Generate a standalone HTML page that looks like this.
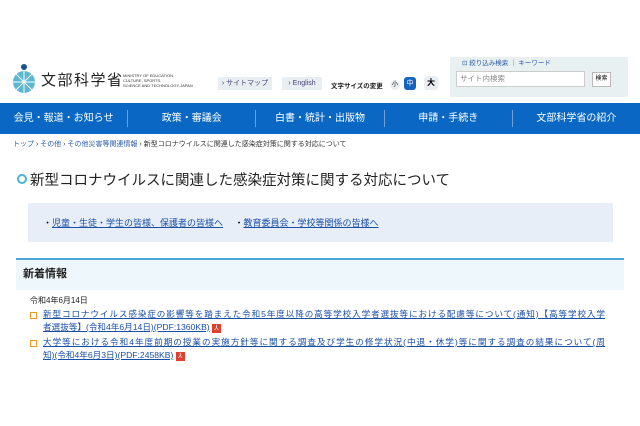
<html><head><style>
body{margin:0;width:640px;height:426px;background:#fff;font-family:"Liberation Sans","Noto Sans CJK JP",sans-serif;position:relative;overflow:hidden}
.a{position:absolute;white-space:nowrap}
a{color:#1a4fa8;text-decoration:underline}
.j{display:block;width:562px;text-align:justify;text-align-last:justify}
.pdf{display:inline-block;width:9px;height:9px;background:#e04030;color:#fff;font-size:7px;line-height:9px;text-align:center;text-decoration:none}
</style></head><body>
<svg class="a" style="left:10px;top:62px" width="28" height="32" viewBox="0 0 28 32"><circle cx="14" cy="5" r="3" fill="#1a4f9c"/><circle cx="14" cy="20" r="11" fill="#5bb8d0"/><g stroke="#fff" stroke-width="1"><line x1="3" y1="20" x2="25" y2="20"/><line x1="14" y1="9" x2="14" y2="31"/><line x1="6" y1="12" x2="22" y2="28"/><line x1="22" y1="12" x2="6" y2="28"/></g></svg>
<div class="a" style="left:41px;top:69px;font-size:15px;letter-spacing:1.5px;color:#222">文部科学省</div>
<div class="a" style="left:123px;top:73px;font-size:4px;line-height:5px;color:#333">MINISTRY OF EDUCATION,<br>CULTURE, SPORTS,<br>SCIENCE AND TECHNOLOGY-JAPAN</div>
<div class="a" style="left:218px;top:77px;width:54px;height:13px;background:#e8eef2;font-size:7px;line-height:13px;color:#447;text-align:center">› サイトマップ</div>
<div class="a" style="left:282px;top:77px;width:40px;height:13px;background:#e8eef2;font-size:7px;line-height:13px;color:#447;text-align:center">› English</div>
<div class="a" style="left:331px;top:80px;font-size:6.5px;color:#222;font-weight:bold">文字サイズの変更</div>
<div class="a" style="left:390px;top:80px;width:10px;height:10px;border-radius:50%;background:#e8eef2;font-size:6px;text-align:center;line-height:10px">小</div>
<div class="a" style="left:404px;top:77px;width:12px;height:13px;border-radius:3px;background:#1565c0;color:#fff;font-size:7px;text-align:center;line-height:13px">中</div>
<div class="a" style="left:424px;top:76px;width:14px;height:14px;border-radius:3px;background:#e8eef2;font-size:8px;font-weight:bold;text-align:center;line-height:14px">大</div>
<div class="a" style="left:450px;top:57px;width:178px;height:40px;background:#e9f0f2"></div>
<div class="a" style="left:462px;top:57px;font-size:6.5px;color:#2a5ba8">⊡ 絞り込み検索 ｜ キーワード</div>
<div class="a" style="left:456px;top:71px;width:124px;height:14px;background:#fff;border:1px solid #ccc;font-size:7.5px;color:#888;line-height:14px;padding-left:3px">サイト内検索</div>
<div class="a" style="left:592px;top:72px;width:17px;height:13px;background:#fff;border:1px solid #bbb;font-size:6px;line-height:13px;text-align:center">検索</div>
<div class="a" style="left:0;top:103px;width:640px;height:31px;background:#0a68c4"></div>
<div class="a" style="left:0;top:103px;width:640px;height:31px;display:flex;color:#fff;font-size:10px;line-height:31px">
<div style="flex:1;text-align:center;border-right:1px solid #6fa0db;margin:7px 0;line-height:17px">会見・報道・お知らせ</div>
<div style="flex:1;text-align:center;border-right:1px solid #6fa0db;margin:7px 0;line-height:17px">政策・審議会</div>
<div style="flex:1;text-align:center;border-right:1px solid #6fa0db;margin:7px 0;line-height:17px">白書・統計・出版物</div>
<div style="flex:1;text-align:center;border-right:1px solid #6fa0db;margin:7px 0;line-height:17px">申請・手続き</div>
<div style="flex:1;text-align:center;margin:7px 0;line-height:17px">文部科学省の紹介</div></div>
<div class="a" style="left:13px;top:139px;font-size:7px;color:#333"><span style="color:#2a5ba8">トップ</span> › <span style="color:#2a5ba8">その他</span> › <span style="color:#2a5ba8">その他災害等関連情報</span> › 新型コロナウイルスに関連した感染症対策に関する対応について</div>
<div class="a" style="left:17px;top:174px;width:6px;height:6px;border:2.5px solid #4cb3d8;border-radius:50%"></div>
<div class="a" style="left:30px;top:169px;font-size:14.5px;color:#222">新型コロナウイルスに関連した感染症対策に関する対応について</div>
<div class="a" style="left:28px;top:203px;width:585px;height:39px;background:#e8eef8"></div>
<div class="a" style="left:43px;top:216px;font-size:9px">・<a>児童・生徒・学生の皆様、保護者の皆様へ</a>　 ・<a>教育委員会・学校等関係の皆様へ</a></div>
<div class="a" style="left:16px;top:258px;width:608px;height:30px;background:#eef7fb;border-top:2px solid #4aa9d6"></div>
<div class="a" style="left:23px;top:265px;font-size:11px;font-weight:bold;color:#222">新着情報</div>
<div class="a" style="left:30px;top:295px;font-size:8px;color:#222">令和4年6月14日</div>
<div class="a" style="left:30px;top:312px;width:5px;height:5px;border:1px solid #e89a20;background:#fff"></div>
<div class="a" style="left:43px;top:308px;font-size:8.6px;line-height:13px"><a class="j">新型コロナウイルス感染症の影響等を踏まえた令和5年度以降の高等学校入学者選抜等における配慮等について(通知)【高等学校入学</a><a>者選抜等】(令和4年6月14日)(PDF:1360KB)</a> <span class="pdf">⅄</span></div>
<div class="a" style="left:30px;top:340px;width:5px;height:5px;border:1px solid #e89a20;background:#fff"></div>
<div class="a" style="left:43px;top:336px;font-size:8.6px;line-height:13px"><a class="j">大学等における令和4年度前期の授業の実施方針等に関する調査及び学生の修学状況(中退・休学)等に関する調査の結果について(周</a><a>知)(令和4年6月3日)(PDF:2458KB)</a> <span class="pdf">⅄</span></div>
</body></html>
